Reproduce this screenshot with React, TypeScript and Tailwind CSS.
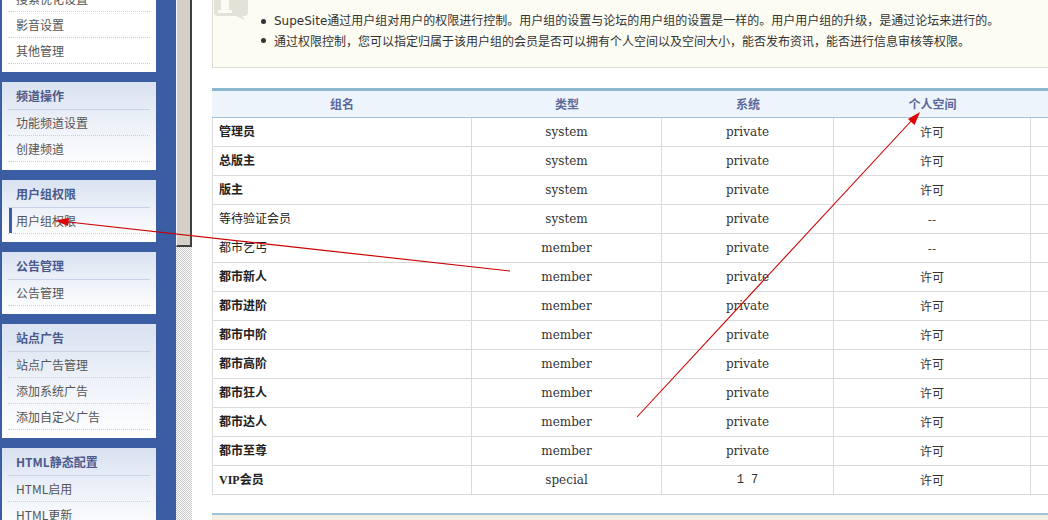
import React from "react";

const cjk = "font-['Noto_Sans_CJK_SC',sans-serif]";

type Card = { title?: string; items: string[]; selected?: number; first?: boolean };

const cards: Card[] = [
  { items: ["搜索优化设置", "影音设置", "其他管理"], first: true },
  { title: "频道操作", items: ["功能频道设置", "创建频道"] },
  { title: "用户组权限", items: ["用户组权限"], selected: 0 },
  { title: "公告管理", items: ["公告管理"] },
  { title: "站点广告", items: ["站点广告管理", "添加系统广告", "添加自定义广告"] },
  { title: "HTML静态配置", items: ["HTML启用", "HTML更新"] },
];

type Row = { name: string; bold: boolean; type: string; sys: string; space: string };

const rows: Row[] = [
  { name: "管理员", bold: true, type: "system", sys: "private", space: "许可" },
  { name: "总版主", bold: true, type: "system", sys: "private", space: "许可" },
  { name: "版主", bold: true, type: "system", sys: "private", space: "许可" },
  { name: "等待验证会员", bold: false, type: "system", sys: "private", space: "--" },
  { name: "都市乞丐", bold: false, type: "member", sys: "private", space: "--" },
  { name: "都市新人", bold: true, type: "member", sys: "private", space: "许可" },
  { name: "都市进阶", bold: true, type: "member", sys: "private", space: "许可" },
  { name: "都市中阶", bold: true, type: "member", sys: "private", space: "许可" },
  { name: "都市高阶", bold: true, type: "member", sys: "private", space: "许可" },
  { name: "都市狂人", bold: true, type: "member", sys: "private", space: "许可" },
  { name: "都市达人", bold: true, type: "member", sys: "private", space: "许可" },
  { name: "都市至尊", bold: true, type: "member", sys: "private", space: "许可" },
  { name: "VIP会员", bold: true, type: "special", sys: "１７", space: "许可" },
];

function SideCard({ card }: { card: Card }) {
  return (
    <div
      className={`ml-[2px] w-[154px] shrink-0 pb-[8px] ${
        card.first ? "-mt-[14px] bg-white" : "bg-gradient-to-b from-[#d9e2f1] via-[#eef2f9] to-white"
      }`}
    >
      {card.title && (
        <div className="mx-[6px] flex h-[28px] items-center border-b border-[#c9d3e6] pl-[8px] text-[12px] font-bold text-[#4b5a8c]">
          {card.title}
        </div>
      )}
      {card.items.map((it, i) => (
        <div
          key={i}
          className="mx-[6px] flex h-[26px] items-center border-b border-dotted border-[#cfcfcf] text-[12px] text-[#555]"
        >
          {card.selected === i ? (
            <div className="ml-[1px] flex h-full items-center border-l-[3px] border-[#3b5da4] pl-[4px]">{it}</div>
          ) : (
            <div className="pl-[8px]">{it}</div>
          )}
        </div>
      ))}
    </div>
  );
}

export default function App() {
  return (
    <div className={`relative flex h-[520px] w-[1048px] overflow-hidden bg-white ${cjk}`}>
      {/* sidebar */}
      <div className="flex w-[176px] shrink-0 flex-col gap-[10px] bg-[#3b5da4]">
        {cards.map((c, i) => (
          <SideCard key={i} card={c} />
        ))}
      </div>

      {/* frame splitter */}
      <div className="flex w-[16px] shrink-0 flex-col">
        <div className="h-[247px] border-b-2 border-l border-r-2 border-b-[#404040] border-l-[#f4f4f4] border-r-[#404040] bg-[#d4d0c8]" />
        <div className="flex-1 bg-[repeating-conic-gradient(#c4c4c4_0_25%,#ffffff_0_50%)] bg-[length:2px_2px]" />
      </div>

      {/* main */}
      <div className="flex w-[900px] shrink-0 flex-col pl-[20px] text-[12px] text-[#333]">
        {/* info box */}
        <div className="-mt-[20px] flex h-[88px] w-[900px] shrink-0 items-start border-b border-l border-[#dcdcd0] bg-[#fcfcf2]">
          <svg width="36" height="40" viewBox="0 0 36 40" className="ml-[1px] shrink-0">
            <path d="M4 0 H30 Q34 0 34 4 V32 Q34 36 30 36 H28 L31 40 L22 36 H4 Q0 36 0 32 V4 Q0 0 4 0 Z" fill="#e2e2d7" />
            <rect x="4" y="2" width="14" height="6" fill="#fbfbf4" />
            <rect x="7" y="8" width="8" height="24" fill="#fbfbf4" />
            <rect x="4" y="30" width="14" height="3" fill="#fbfbf4" />
          </svg>
          <ul className="ml-[11px] pt-[32px] leading-[19px]">
            <li className="flex items-center">
              <span className="mr-[8px] inline-block h-[5px] w-[5px] rounded-full bg-[#333]" />
              <span className="font-['DejaVu_Sans','Noto_Sans_CJK_SC',sans-serif] text-[12px]">
                SupeSite通过用户组对用户的权限进行控制。用户组的设置与论坛的用户组的设置是一样的。用户用户组的升级，是通过论坛来进行的。
              </span>
            </li>
            <li className="flex items-center">
              <span className="mr-[8px] inline-block h-[5px] w-[5px] rounded-full bg-[#333]" />
              <span>通过权限控制，您可以指定归属于该用户组的会员是否可以拥有个人空间以及空间大小，能否发布资讯，能否进行信息审核等权限。</span>
            </li>
          </ul>
        </div>

        {/* table */}
        <div className="mt-[20px] w-[880px] shrink-0 border-t-[3px] border-[#8db7cf]">
          <div className="flex h-[27px] items-center border-b border-[#a3c3da] bg-[#eef4fc] font-bold text-[#5a6a9b]">
            <div className="w-[260px] text-center">组名</div>
            <div className="w-[190px] text-center">类型</div>
            <div className="w-[172px] text-center">系统</div>
            <div className="w-[197px] text-center">个人空间</div>
          </div>
          <div className="border-l border-[#dadada]">
            {rows.map((r, i) => (
              <div key={i} className="flex h-[29px] border-b border-[#dadada]">
                <div
                  className={`flex w-[259px] items-center border-r border-[#dadada] pl-[6px] font-['Liberation_Serif','Noto_Sans_CJK_SC',serif] text-[#222] ${
                    r.bold ? "font-bold" : ""
                  }`}
                >
                  {r.name}
                </div>
                <div className="flex w-[190px] items-center justify-center border-r border-[#dadada] font-['DejaVu_Serif',serif]">
                  {r.type}
                </div>
                <div
                  className={`flex w-[172px] items-center justify-center border-r border-[#dadada] ${
                    r.sys === "private" ? "font-['DejaVu_Serif',serif]" : "font-['Liberation_Mono',monospace]"
                  }`}
                >
                  {r.sys === "private" ? "private" : "1 7"}
                </div>
                <div className="flex w-[197px] items-center justify-center border-r border-[#dadada]">{r.space}</div>
                <div className="flex-1" />
              </div>
            ))}
          </div>
        </div>

        <div className="mt-[18px] h-[20px] w-[880px] shrink-0 border-t-2 border-[#9cc4d8] bg-[#f3efe4]" />
      </div>

      {/* annotation arrows */}
      <svg className="pointer-events-none absolute left-0 top-0" width="1048" height="520">
        <line x1="510" y1="271" x2="64" y2="221.5" stroke="#cc0000" strokeWidth="1.2" />
        <polygon points="55,220.5 69,218 68,226" fill="#dd0000" />
        <line x1="637" y1="417" x2="913" y2="119" stroke="#cc0000" strokeWidth="1.1" />
        <polygon points="920,112 914.5,125 908,119" fill="#dd0000" />
      </svg>
    </div>
  );
}
